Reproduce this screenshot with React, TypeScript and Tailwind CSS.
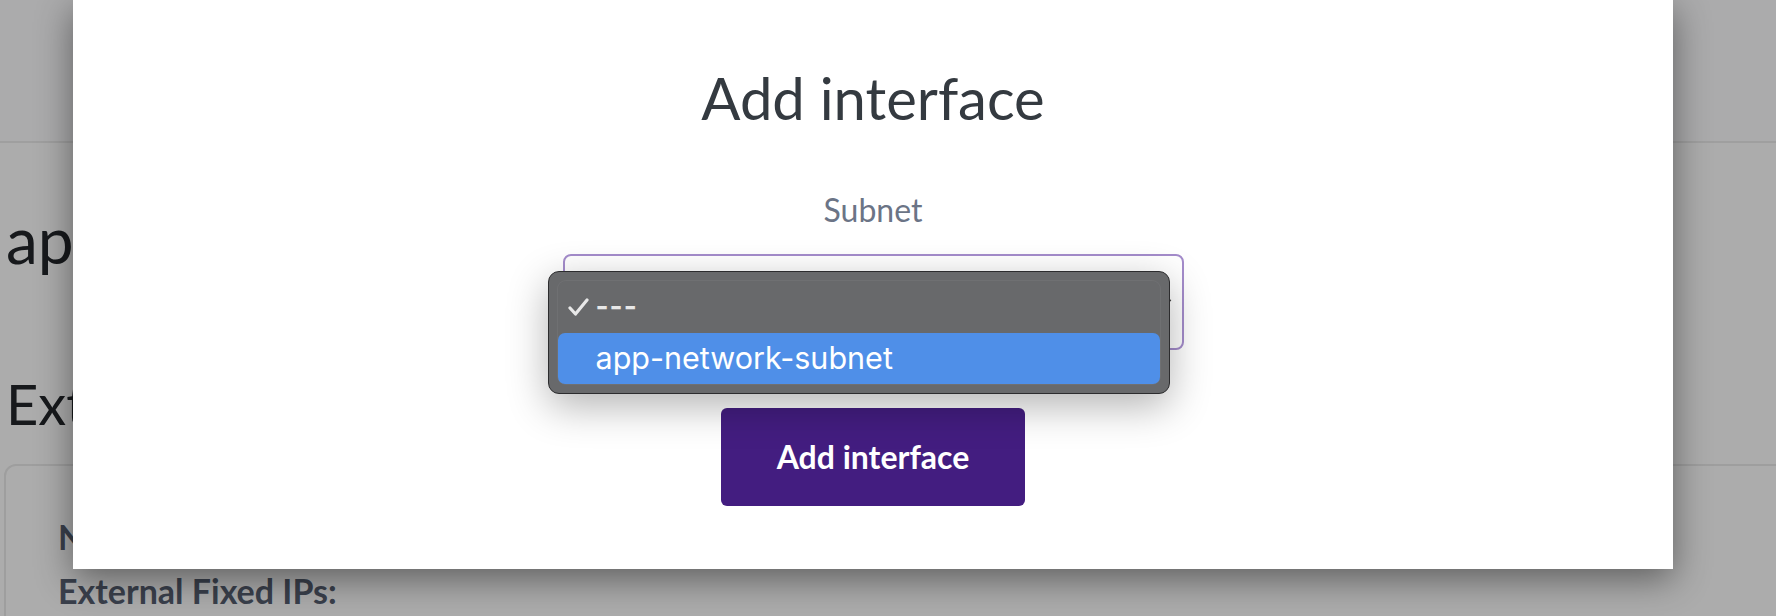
import { ChevronDown } from "lucide-react";

const SUBNETS = ["---", "app-network-subnet"];

const App = () => {
  return (
    <div className="relative w-[1776px] h-[616px] overflow-hidden bg-[#f7f7f7] font-['Lato',sans-serif]">
      {/* Page behind the modal */}
      <header className="h-[143px] bg-[#f5f5f6] border-b-2 border-[#e4e4e4]" />
      <main className="pl-[6px]">
        <h1 className="mt-[65px] text-[64px] leading-[1] text-[#212529] whitespace-nowrap">
          app-network-router
        </h1>
        <h2 className="mt-[104px] text-[56px] leading-[1] text-[#212529] whitespace-nowrap">
          External gateway
        </h2>
        <div className="mt-[32px] ml-[-2px] w-[1900px] h-[300px] border-2 border-[#e2e2e2] rounded-[12px] pl-[52px] pt-[54px] space-y-[20px]">
          <p className="text-[34px] leading-[1] font-bold text-[#545c6e]">Name:</p>
          <p className="text-[34px] leading-[1] font-bold text-[#545c6e]">External Fixed IPs:</p>
        </div>
      </main>

      {/* Backdrop */}
      <div className="absolute inset-0 bg-black/30" />

      {/* Modal */}
      <div className="absolute left-[73px] top-0 w-[1600px] h-[569px] bg-white shadow-[0_10px_34px_rgba(0,0,0,0.45)] flex flex-col items-center">
        <h2 className="pt-[63px] text-[58px] leading-[1.2] text-[#343a40]">Add interface</h2>
        <label className="mt-[58px] text-[32px] leading-[1.2] text-[#6b7486]">Subnet</label>

        <div className="relative mt-[25px] w-[621px] h-[96px] rounded-[8px] border-2 border-[#a48ccb] bg-white">
          <ChevronDown size={22} strokeWidth={1.5} className="absolute right-[6px] top-[36px] text-[#444]" />

          {/* Native select menu, open */}
          <div className="absolute left-[-17px] top-[15px] w-[622px] h-[123px] rounded-[11px] border border-[#2c2c2e] bg-[#68696b] shadow-[0_12px_40px_rgba(0,0,0,0.3)] p-[9px] font-['Inter',sans-serif]">
            <div className="h-full rounded-[8px] ring-1 ring-[#7a7b7d]/40 flex flex-col">
              {SUBNETS.map((s, i) => (
                <div
                  key={s}
                  className={`flex items-center h-[51px] rounded-[7px] ${i === 1 ? "mt-[1px] bg-[#4f8fe8] text-white" : "text-[#e8e8e8]"}`}
                >
                  <span className="w-[38px] shrink-0 pl-[10px] flex items-center">
                    {i === 0 && (
                      <svg width="21" height="18" viewBox="0 0 21 18" fill="none" className="mt-[2px]">
                        <path d="M2 10 L7.5 16 L19 2" stroke="#e8e8e8" strokeWidth="3.2" strokeLinecap="round" strokeLinejoin="round" />
                      </svg>
                    )}
                  </span>
                  <span className={`leading-none ${i === 0 ? "text-[28px] font-bold tracking-[1px]" : "text-[30.5px]"}`}>{s}</span>
                </div>
              ))}
            </div>
          </div>
        </div>

        <button className="mt-[58px] w-[304px] h-[98px] rounded-[6px] bg-[#431d80] text-white text-[32px] font-bold">
          Add interface
        </button>
      </div>
    </div>
  );
};

export default App;
